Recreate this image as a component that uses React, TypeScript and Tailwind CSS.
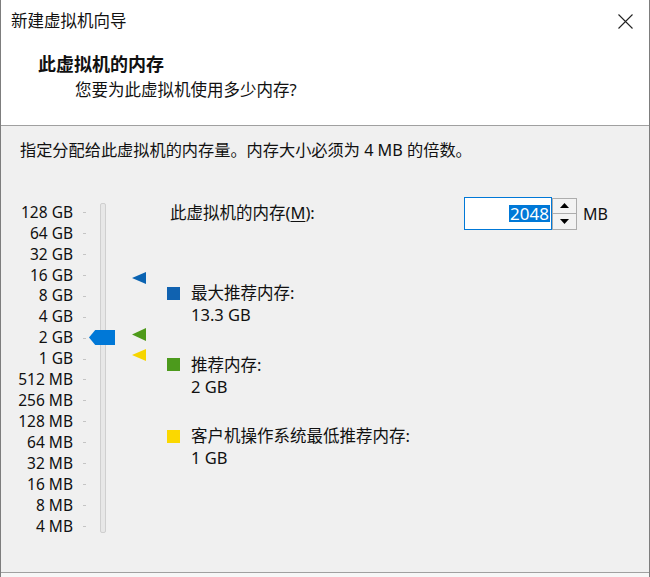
const scale = [
  "128 GB", "64 GB", "32 GB", "16 GB", "8 GB", "4 GB", "2 GB", "1 GB",
  "512 MB", "256 MB", "128 MB", "64 MB", "32 MB", "16 MB", "8 MB", "4 MB",
];

const legend = [
  { color: "bg-[#1062b0]", label: "最大推荐内存:", value: "13.3 GB" },
  { color: "bg-[#4c9a1c]", label: "推荐内存:", value: "2 GB" },
  { color: "bg-[#fbd800]", label: "客户机操作系统最低推荐内存:", value: "1 GB" },
];

function MemorySlider() {
  return (
    <div className="relative w-[166px] shrink-0">
      {/* labels + ticks */}
      <div className="pt-[5px]">
        {scale.map((s) => (
          <div key={s} className="flex items-center h-[20.95px]">
            <span className="w-[72px] text-right text-[15.5px] leading-none">{s}</span>
            <span className="ml-[10px] w-[3px] h-px bg-[#c4c4c4]" />
          </div>
        ))}
      </div>

      {/* track */}
      <div className="absolute left-[99px] top-[6px] w-[6px] h-[330px] rounded-[2px] border border-[#cfcfcf] bg-[#e7e7e7]" />

      {/* thumb */}
      <div className="absolute left-[88px] top-[133px] w-[26px] h-[15px] bg-[#0078d7] [clip-path:polygon(0_50%,24%_0,100%_0,100%_100%,24%_100%)]" />

      {/* recommendation markers */}
      <div className="absolute left-[131px] top-[75px] w-[14px] h-[12px] bg-[#0a63b2] [clip-path:polygon(0_50%,100%_0,100%_100%)]" />
      <div className="absolute left-[131px] top-[131px] w-[14px] h-[13px] bg-[#4e9a1a] [clip-path:polygon(0_50%,100%_0,100%_100%)]" />
      <div className="absolute left-[131px] top-[152px] w-[14px] h-[12px] bg-[#f6d500] [clip-path:polygon(0_50%,100%_0,100%_100%)]" />
    </div>
  );
}

function Spinner() {
  return (
    <div className="flex flex-col w-[25px] h-[32px] border border-[#adadad] bg-[#f3f3f3]">
      <div className="flex-1 flex items-center justify-center border-b border-[#adadad]">
        <svg width="9" height="5" viewBox="0 0 9 5"><path d="M0 5 L4.5 0 L9 5 Z" fill="#000" /></svg>
      </div>
      <div className="flex-1 flex items-center justify-center">
        <svg width="9" height="5" viewBox="0 0 9 5"><path d="M0 0 L4.5 5 L9 0 Z" fill="#000" /></svg>
      </div>
    </div>
  );
}

export default function App() {
  return (
    <div className="w-[650px] h-[577px] flex flex-col bg-white border-x border-[#7d7d7d] text-[#111] overflow-hidden font-['Noto_Sans','Noto_Sans_CJK_SC',sans-serif]">
      {/* title bar */}
      <div className="h-[42px] shrink-0 flex items-center justify-between pl-[10px] pr-[16px]">
        <span className="text-[16.5px] leading-none">新建虚拟机向导</span>
        <svg width="15" height="15" viewBox="0 0 15 15">
          <path d="M0.5 0.5 L14.5 14.5 M14.5 0.5 L0.5 14.5" stroke="#222" strokeWidth="1.1" />
        </svg>
      </div>

      {/* header */}
      <div className="h-[84px] shrink-0 pl-[37px] pt-[10px] border-b border-[#a0a0a0]">
        <div className="font-bold text-[18px] leading-[24px]">此虚拟机的内存</div>
        <div className="pl-[37px] mt-[2px] text-[16.5px] leading-[24px]">您要为此虚拟机使用多少内存?</div>
      </div>

      {/* body */}
      <div className="flex-1 bg-[#f0f0f0] border-b border-[#a0a0a0] pt-[12px]">
        <div className="pl-[19px] text-[16.2px] leading-[24px]">
          指定分配给此虚拟机的内存量。内存大小必须为 4 MB 的倍数。
        </div>

        <div className="flex mt-[35px]">
          <MemorySlider />

          <div className="flex-1">
            <div className="flex items-center h-[33px]">
              <span className="w-[297px] pl-[3px] text-[16.5px]">
                此虚拟机的内存(<span className="underline underline-offset-2">M</span>):
              </span>
              <div className="w-[88px] h-[33px] border border-[#0078d7] bg-white flex items-center justify-end pr-px">
                <span className="bg-[#0078d7] text-white text-[17px] leading-[17px] px-px">2048</span>
              </div>
              <Spinner />
              <span className="ml-[6px] text-[16px]">MB</span>
            </div>

            <div className="mt-[52px] flex flex-col gap-[27.5px]">
              {legend.map((l) => (
                <div key={l.label} className="flex">
                  <span className={`mt-[4.5px] w-[13px] h-[13px] shrink-0 ${l.color}`} />
                  <div className="ml-[11px] text-[16.5px] leading-[22px]">
                    <div>{l.label}</div>
                    <div>{l.value}</div>
                  </div>
                </div>
              ))}
            </div>
          </div>
        </div>
      </div>

      <div className="h-[4px] shrink-0 bg-[#f7f7f7]" />
    </div>
  );
}
